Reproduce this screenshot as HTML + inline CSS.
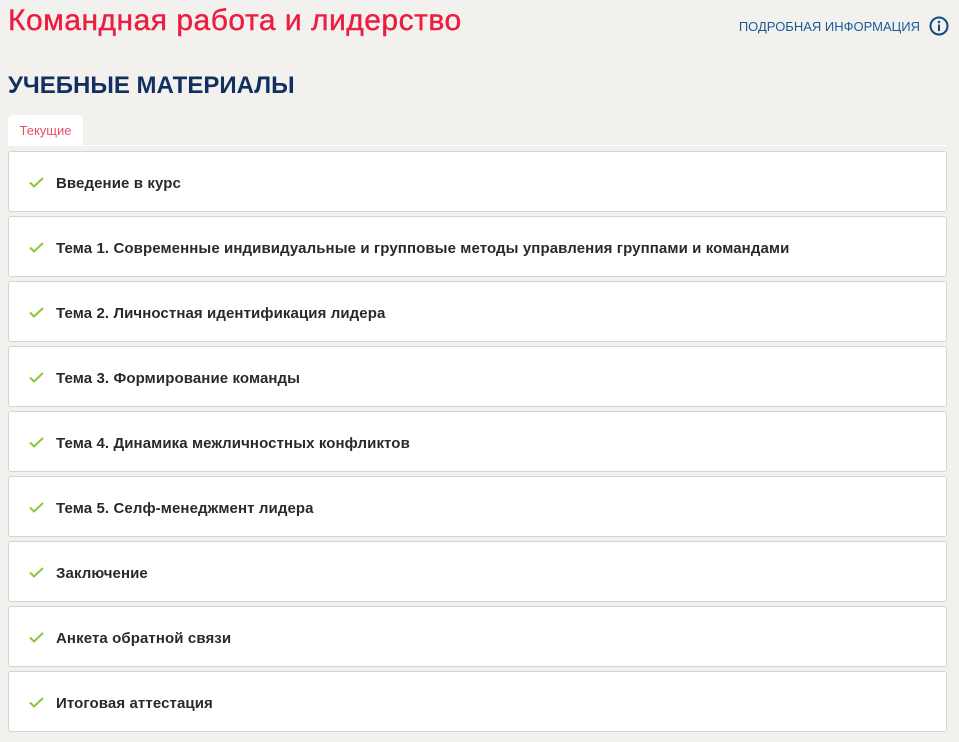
<!DOCTYPE html>
<html><head><meta charset="utf-8"><style>
body{margin:0;background:#f2f1ee;font-family:"Liberation Sans","DejaVu Sans",sans-serif;width:959px;height:742px;overflow:hidden;position:relative}
.t{position:absolute;left:8px;top:4px;font-size:30px;color:#ec1d40;letter-spacing:0.5px;-webkit-text-stroke:0.4px #ec1d40}
.info{position:absolute;right:10px;top:16px;font-size:13px;color:#1d5b96;display:flex;align-items:center}
.info span{margin-right:9px}
.h{position:absolute;left:8px;top:72px;font-size:24px;font-weight:bold;color:#12305f}
.tab{position:absolute;left:8px;top:115px;width:75px;height:30px;background:#fff;border-radius:5px 5px 0 0;font-size:13px;color:#e8506a;text-align:center;line-height:31px}
.line{position:absolute;left:8px;top:145px;width:939px;height:1px;background:#fff}
.c{position:absolute;left:8px;width:937px;height:59px;background:#fff;border:1px solid #d4d4d4;border-radius:3px}
.c svg{position:absolute;left:20px;top:25px}
.c span{position:absolute;left:47px;top:23px;font-size:15px;font-weight:bold;color:#2a2a2a;letter-spacing:0.1px}
</style></head><body>
<div class="t">Командная работа и лидерство</div>
<div class="info"><span>ПОДРОБНАЯ ИНФОРМАЦИЯ</span><svg width="20" height="20" viewBox="0 0 20 20"><circle cx="10" cy="10" r="8.5" fill="none" stroke="#0f4a86" stroke-width="2"/><circle cx="10" cy="6" r="1.3" fill="#0f4a86"/><rect x="9" y="8.5" width="2" height="6.5" fill="#0f4a86"/></svg></div>
<div class="h">УЧЕБНЫЕ МАТЕРИАЛЫ</div>
<div class="tab">Текущие</div>
<div class="line"></div>
<div class="c" style="top:151px"><svg width="15" height="11"><path d="M1 5.5l4 4L14 1" fill="none" stroke="#8cc63f" stroke-width="2"/></svg><span>Введение в курс</span></div>
<div class="c" style="top:216px"><svg width="15" height="11"><path d="M1 5.5l4 4L14 1" fill="none" stroke="#8cc63f" stroke-width="2"/></svg><span>Тема 1. Современные индивидуальные и групповые методы управления группами и командами</span></div>
<div class="c" style="top:281px"><svg width="15" height="11"><path d="M1 5.5l4 4L14 1" fill="none" stroke="#8cc63f" stroke-width="2"/></svg><span>Тема 2. Личностная идентификация лидера</span></div>
<div class="c" style="top:346px"><svg width="15" height="11"><path d="M1 5.5l4 4L14 1" fill="none" stroke="#8cc63f" stroke-width="2"/></svg><span>Тема 3. Формирование команды</span></div>
<div class="c" style="top:411px"><svg width="15" height="11"><path d="M1 5.5l4 4L14 1" fill="none" stroke="#8cc63f" stroke-width="2"/></svg><span>Тема 4. Динамика межличностных конфликтов</span></div>
<div class="c" style="top:476px"><svg width="15" height="11"><path d="M1 5.5l4 4L14 1" fill="none" stroke="#8cc63f" stroke-width="2"/></svg><span>Тема 5. Селф-менеджмент лидера</span></div>
<div class="c" style="top:541px"><svg width="15" height="11"><path d="M1 5.5l4 4L14 1" fill="none" stroke="#8cc63f" stroke-width="2"/></svg><span>Заключение</span></div>
<div class="c" style="top:606px"><svg width="15" height="11"><path d="M1 5.5l4 4L14 1" fill="none" stroke="#8cc63f" stroke-width="2"/></svg><span>Анкета обратной связи</span></div>
<div class="c" style="top:671px"><svg width="15" height="11"><path d="M1 5.5l4 4L14 1" fill="none" stroke="#8cc63f" stroke-width="2"/></svg><span>Итоговая аттестация</span></div>
</body></html>
